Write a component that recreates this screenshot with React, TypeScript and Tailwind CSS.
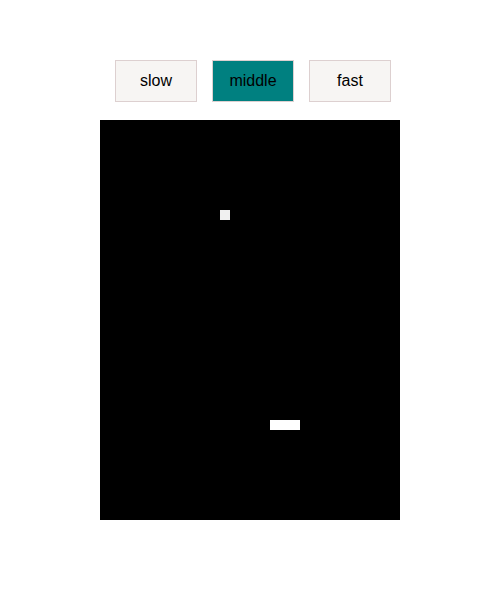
export default function App() {
  const btn =
    "w-[82px] h-[42px] border border-[#ddd0d0] text-[16px] text-black flex items-center justify-center";
  return (
    <div className="w-[497px] h-[615px] bg-white" style={{ fontFamily: '"Liberation Sans", Arial, sans-serif' }}>
      <div className="pt-[60px] pl-[115px] flex gap-[15px]">
        <button className={`${btn} bg-[#f7f5f3]`}>slow</button>
        <button className={`${btn} bg-[#008080]`}>middle</button>
        <button className={`${btn} bg-[#f7f5f3]`}>fast</button>
      </div>
      <div className="ml-[100px] mt-[18px] w-[300px] h-[400px] bg-black relative">
        <div className="absolute left-[120px] top-[90px] w-[10px] h-[10px] bg-[#f0f0f0]" />
        <div className="absolute left-[170px] top-[300px] w-[30px] h-[10px] bg-white" />
      </div>
    </div>
  );
}
